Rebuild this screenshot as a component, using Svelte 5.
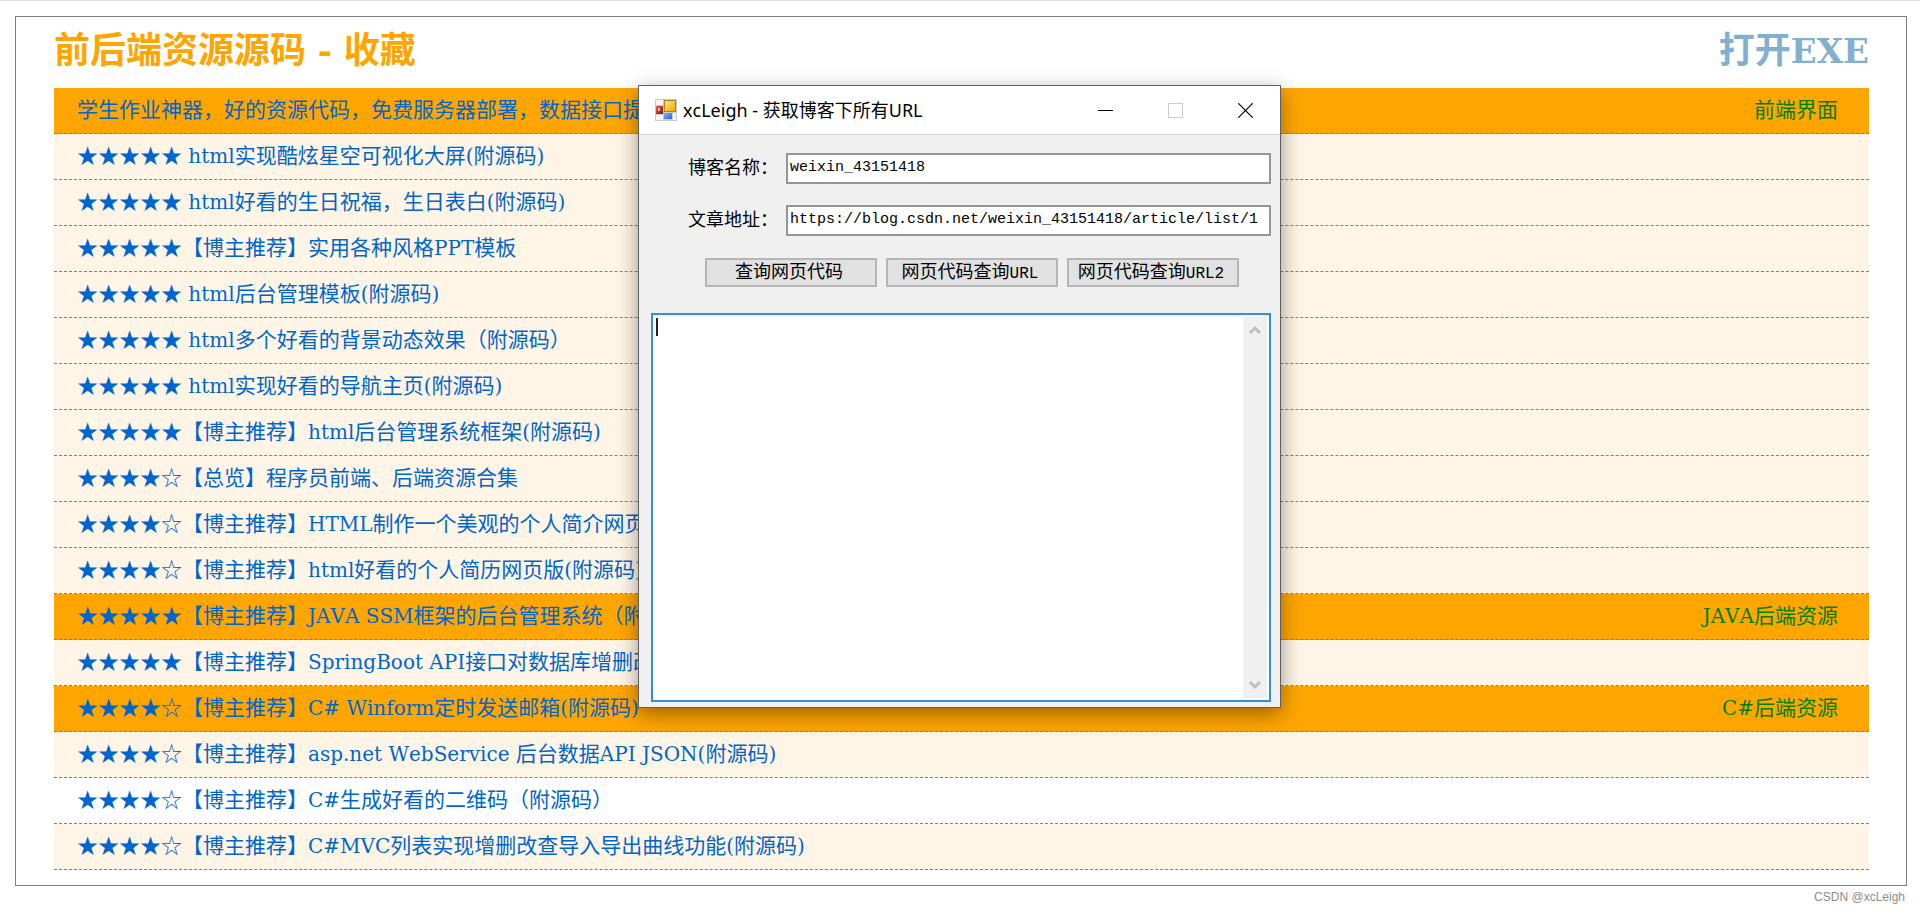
<script>
  const rows = [
    { stars: 0, text: '学生作业神器，好的资源代码，免费服务器部署，数据接口提', tag: '前端界面' },
    { stars: 5, text: ' html实现酷炫星空可视化大屏(附源码)' },
    { stars: 5, text: ' html好看的生日祝福，生日表白(附源码)' },
    { stars: 5, text: '【博主推荐】实用各种风格PPT模板' },
    { stars: 5, text: ' html后台管理模板(附源码)' },
    { stars: 5, text: ' html多个好看的背景动态效果（附源码）' },
    { stars: 5, text: ' html实现好看的导航主页(附源码)' },
    { stars: 5, text: '【博主推荐】html后台管理系统框架(附源码)' },
    { stars: 4, text: '【总览】程序员前端、后端资源合集' },
    { stars: 4, text: '【博主推荐】HTML制作一个美观的个人简介网页' },
    { stars: 4, text: '【博主推荐】html好看的个人简历网页版(附源码)' },
    { stars: 5, text: '【博主推荐】JAVA SSM框架的后台管理系统（附', tag: 'JAVA后端资源' },
    { stars: 5, text: '【博主推荐】SpringBoot API接口对数据库增删改' },
    { stars: 4, text: '【博主推荐】C# Winform定时发送邮箱(附源码)', tag: 'C#后端资源' },
    { stars: 4, text: '【博主推荐】asp.net WebService 后台数据API JSON(附源码)' },
    { stars: 4, text: '【博主推荐】C#生成好看的二维码（附源码）', plain: true },
    { stars: 4, text: '【博主推荐】C#MVC列表实现增删改查导入导出曲线功能(附源码)' }
  ];

  // Splits a string into alternating Latin and Chinese runs.
  const runs = (text) => text.match(/[\x20-\x7e]+|[^\x20-\x7e]+/g) ?? [];
  const isLatin = (run) => /^[\x20-\x7e]/.test(run);

  let blog = $state('weixin_43151418');
  let address = $state('https://blog.csdn.net/weixin_43151418/article/list/1');
  let output = $state('');
</script>

{#snippet mixed(text)}{#each runs(text) as run}{#if isLatin(run)}<span class="latin">{run}</span>{:else}{run}{/if}{/each}{/snippet}

<div class="page" lang="zh-CN">
  <main class="panel">
    <header>
      <h1>{@render mixed('前后端资源源码 - 收藏')}</h1>
      <a class="open" href="#exe">{@render mixed('打开EXE')}</a>
    </header>
    <ul>
      {#each rows as row}
        <li class:head={row.tag} class:plain={row.plain}>
          <a href="#item">{#if row.stars}<span class="stars">{'★'.repeat(row.stars)}{'☆'.repeat(5 - row.stars)}</span>{/if}{@render mixed(row.text)}</a>
          {#if row.tag}<span class="tag">{@render mixed(row.tag)}</span>{/if}
        </li>
      {/each}
    </ul>
  </main>
  <footer>CSDN @xcLeigh</footer>

  <section class="window">
    <div class="titlebar">
      <svg class="appicon" viewBox="0 0 22 22" aria-hidden="true">
        <defs>
          <linearGradient id="gold" x1="0" y1="0" x2="1" y2="1"><stop offset="0" stop-color="#ffe98a" /><stop offset="1" stop-color="#e5a700" /></linearGradient>
          <linearGradient id="red" x1="0" y1="0" x2="1" y2="1"><stop offset="0" stop-color="#e0685c" /><stop offset="1" stop-color="#8e0d0d" /></linearGradient>
          <linearGradient id="blue" x1="0" y1="0" x2="1" y2="1"><stop offset="0" stop-color="#7db0ff" /><stop offset="1" stop-color="#2f62cf" /></linearGradient>
        </defs>
        <rect width="22" height="22" fill="#c9c9c9" />
        <rect x="1" y="1" width="7" height="5" fill="#f7f7f7" />
        <rect x="1" y="16" width="7" height="5" fill="#f7f7f7" />
        <rect x="18" y="14" width="3" height="7" fill="#f2f2f2" />
        <rect x="9.5" y="1.5" width="11" height="11" fill="url(#gold)" stroke="#b58311" />
        <rect x="1" y="7" width="7" height="8" fill="url(#red)" />
        <rect x="3" y="9" width="2" height="3" fill="#f2b0a8" />
        <rect x="9" y="14" width="8" height="6" fill="url(#blue)" />
      </svg>
      <h2>xcLeigh - 获取博客下所有URL</h2>
      <div class="controls">
        <button aria-label="最小化"><svg viewBox="0 0 15 15"><path d="M0 7.5H15" stroke="#000" /></svg></button>
        <button aria-label="最大化" disabled><svg viewBox="0 0 15 15"><rect x=".5" y=".5" width="14" height="14" fill="none" stroke="#ccc" /></svg></button>
        <button aria-label="关闭"><svg viewBox="0 0 15 15"><path d="M.3 .3L14.7 14.7M14.7 .3L.3 14.7" stroke="#000" stroke-width="1.2" /></svg></button>
      </div>
    </div>
    <div class="body">
      <div class="field"><label for="blog">博客名称：</label><input id="blog" type="text" bind:value={blog} /></div>
      <div class="field"><label for="address">文章地址：</label><input id="address" type="text" bind:value={address} /></div>
      <div class="actions">
        <button>查询网页代码</button>
        <button>网页代码查询<span>URL</span></button>
        <button>网页代码查询<span>URL2</span></button>
      </div>
      <div class="output">
        <textarea aria-label="网页代码" bind:value={output}></textarea>
        <i class="caret"></i>
        <div class="scroll" aria-hidden="true">
          <svg viewBox="0 0 12 10"><path d="M1 8L6 3L11 8" fill="none" stroke="#bfbfbf" stroke-width="3" /></svg>
          <svg viewBox="0 0 12 10"><path d="M1 2L6 7L11 2" fill="none" stroke="#bfbfbf" stroke-width="3" /></svg>
        </div>
      </div>
    </div>
  </section>
</div>

<style>
  :global(body) {
    margin: 0;
    background: #fff;
  }
  .page {
    position: relative;
    box-sizing: border-box;
    min-height: 100vh;
    padding: 15px 13px 0 15px;
    border-top: 1px solid #dcdcdc;
    overflow: hidden;
    font-family: "DejaVu Serif", "Noto Sans CJK SC", serif;
    font-kerning: none;
  }
  .panel {
    border: 1px solid #808080;
    padding: 0 37px 15px 38px;
  }
  header {
    display: flex;
    justify-content: space-between;
    height: 71px;
  }
  h1, .open {
    margin: 0;
    font-size: 36px;
    font-weight: bold;
    line-height: 66px;
  }
  h1 {
    color: #ffa500;
  }
  .open {
    color: #84b0d0;
    text-decoration: none;
  }
  header .latin {
    font-size: 34px;
    line-height: 1;
  }
  ul {
    margin: 0;
    padding: 0;
    list-style: none;
  }
  li {
    display: flex;
    justify-content: space-between;
    height: 45px;
    padding: 0 31px 0 23px;
    border-bottom: 1px dashed #808080;
    background: #fff5e6;
    font-size: 21px;
    line-height: 45px;
    white-space: pre;
  }
  li a {
    color: #0066cc;
    text-decoration: none;
  }
  li .latin {
    font-size: 20px;
    line-height: 1;
  }
  .stars {
    font-family: "Noto Sans CJK SC", sans-serif;
    line-height: 1;
  }
  li.head {
    background: #ffa500;
  }
  li.plain {
    background: #fff;
  }
  .tag {
    color: #008000;
  }
  footer {
    padding: 3px 2px 0 0;
    color: #8c8c8c;
    font: 12px/16px "Liberation Sans", sans-serif;
    text-align: right;
  }

  .window {
    position: absolute;
    top: 84px;
    left: calc(50% - 322px);
    box-sizing: border-box;
    width: 643px;
    border: 1px solid #5f5f5f;
    background: #f0f0f0;
    box-shadow: 0 6px 20px rgba(0, 0, 0, 0.4);
    color: #000;
    font-family: "Noto Sans", "Noto Sans CJK SC", sans-serif;
    font-size: 18px;
  }
  .titlebar {
    display: flex;
    align-items: center;
    height: 48px;
    padding-left: 16px;
    border-bottom: 1px solid #d8d8d8;
    background: #fff;
  }
  .appicon {
    width: 22px;
    height: 22px;
  }
  h2 {
    flex: 1;
    margin: 0 0 0 6px;
    font-size: 18px;
    font-weight: 400;
    line-height: 24px;
  }
  .controls {
    display: flex;
  }
  .controls button {
    display: grid;
    place-items: center;
    width: 70px;
    height: 48px;
    padding: 0;
    border: 0;
    background: none;
  }
  .controls svg {
    width: 15px;
    height: 15px;
  }
  .body {
    padding: 18px 9px 5px 12px;
  }
  .field {
    display: flex;
    align-items: center;
    margin-bottom: 21px;
    padding-left: 37px;
  }
  label {
    width: 98px;
    padding-bottom: 6px;
    font-family: "Noto Sans CJK SC", sans-serif;
    line-height: 24px;
  }
  input {
    flex: 1;
    box-sizing: border-box;
    min-width: 0;
    height: 31px;
    padding: 0 2px 2px;
    border: 2px solid #959595;
    background: #fff;
    color: #000;
    font: 15px "Liberation Mono", monospace;
    outline: none;
  }
  .actions {
    display: flex;
    gap: 9px;
    padding: 1px 32px 0 54px;
  }
  .actions button {
    flex: 1;
    box-sizing: border-box;
    height: 29px;
    padding: 0 4px 4px 0;
    border: 2px solid #b5b5b5;
    background: #e1e1e1;
    color: #000;
    font: 18px/21px "Noto Sans CJK SC", sans-serif;
    white-space: nowrap;
  }
  .actions span {
    font: 16px/1 "Liberation Mono", monospace;
  }
  .output {
    position: relative;
    display: flex;
    box-sizing: border-box;
    height: 389px;
    margin-top: 26px;
    padding: 2px;
    border: 2px solid #3090e0;
    background: #fff;
  }
  textarea {
    flex: 1;
    padding: 0 2px;
    border: 0;
    background: #fff;
    font: 15px "Liberation Mono", monospace;
    resize: none;
    outline: none;
  }
  .caret {
    position: absolute;
    top: 3px;
    left: 3px;
    width: 2px;
    height: 18px;
    background: #222;
  }
  .scroll {
    display: flex;
    flex-direction: column;
    align-items: center;
    justify-content: space-between;
    box-sizing: border-box;
    width: 24px;
    padding: 8px 0;
    background: #f0f0f0;
  }
  .scroll svg {
    width: 12px;
    height: 10px;
  }
</style>
